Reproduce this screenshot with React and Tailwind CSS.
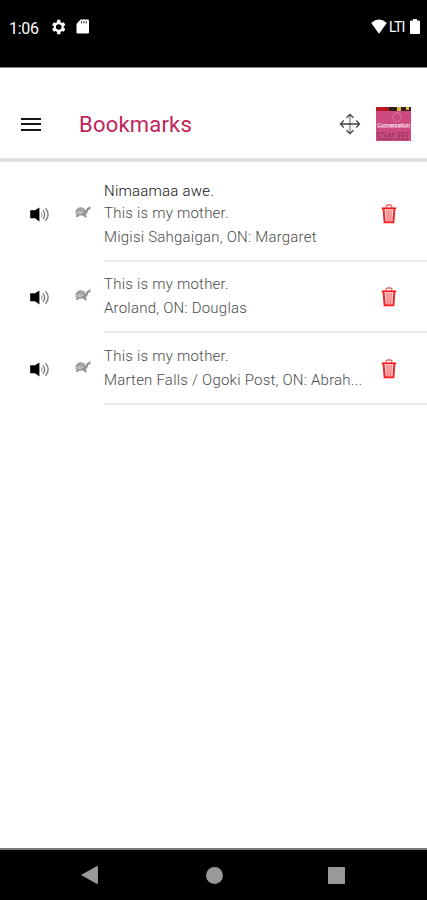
import React from "react";

const entries = [
  {
    title: "Nimaamaa awe.",
    text: "This is my mother.",
    source: "Migisi Sahgaigan, ON: Margaret",
    height: "h-[100px]",
    pad: "pt-[18px]",
    iconPad: "pt-[42px]",
  },
  {
    text: "This is my mother.",
    source: "Aroland, ON: Douglas",
    height: "h-[71px]",
    pad: "pt-[11px]",
    iconPad: "pt-[25px]",
  },
  {
    text: "This is my mother.",
    source: "Marten Falls / Ogoki Post, ON: Abrah...",
    height: "h-[72px]",
    pad: "pt-[12px]",
    iconPad: "pt-[26px]",
  },
];

function Speaker() {
  return (
    <svg className="h-5 w-5 shrink-0" viewBox="0 0 20 20" fill="none">
      <path d="M.2 6.3H5l4.4-2.8v14L5 14.3H.2z" fill="#000" />
      <path d="M11.4 8.5q1.6 2 0 4.3" stroke="#888" strokeWidth="1" />
      <path d="M13 6.3q3.2 4.2 0 8.6" stroke="#666" strokeWidth="1.1" />
      <path d="M15.4 4.3q5.4 6 0 12.4" stroke="#888" strokeWidth="1.5" />
    </svg>
  );
}

function Turtle() {
  return (
    <svg className="h-[18px] w-[18px] shrink-0" viewBox="0 0 18 18">
      <path d="M1.4 7.4Q2.6 3.4 6.6 3.2q4 0 5 4l-1.2 1.6H2z" fill="#9a9a9a" />
      <path
        d="M.3 8.6q3 1.4 6.8.8 3.6-.6 4.8-3.4l1.2-1.9q.9-.7 1.5-.6.3-1.3 1.4-1 1 .5.5 1.5.5 1.4-2.3 1.9-.5 3.2-2.6 4.6l1.6 2.8h-2.4l-1.6-1.7H5.2l-1 1.5H1.9l.8-2.3z"
        fill="#929292"
      />
      <path d="M2.5 8.2h7.5M4.5 5.6 6 8.2m2-4-.7 4" stroke="#d0d0d0" strokeWidth=".7" />
    </svg>
  );
}

function Trash() {
  return (
    <svg className="h-5 w-4 shrink-0" viewBox="0 0 16 20" fill="none">
      <path d="M5.2 4V2.2Q5.4 1 6.7 1h2.6q1.3 0 1.5 1.2V4" stroke="#f46a6a" strokeWidth="1.3" />
      <path d="M.8 4.4h14.4" stroke="#f01717" strokeWidth="1.9" />
      <path d="M2.6 5l1 13.2h8.8l1-13.2" fill="#ffdada" stroke="#f22424" strokeWidth="2" />
      <path d="M5.9 5.5l.3 12M8 5.5v12m2.1-12-.3 12" stroke="#f25a5a" strokeWidth="1" />
    </svg>
  );
}

function MoveIcon() {
  return (
    <svg className="h-[22px] w-[22px]" viewBox="0 0 22 22" fill="none" stroke="#444" strokeWidth="1.3">
      <path d="M11 1.5v19" stroke="#888" />
      <path d="M1.5 11h19" stroke="#222" />
      <path d="M7.5 4.7 11 1.5l3.5 3.2M7.5 17.3 11 20.5l3.5-3.2M4.7 7.5 1.5 11l3.2 3.5M17.3 7.5l3.2 3.5-3.2 3.5" />
    </svg>
  );
}

function CourseCover() {
  return (
    <div className="relative h-[34px] w-[35px] bg-[#cd4a80]">
      <svg className="block h-full w-full" viewBox="0 0 35 34" fill="none">
        <path d="M0 0h13v4H0z" fill="#b71822" />
        <path d="M13 0h22v4H13z" fill="#33201c" />
        <path d="M21 0h4v4h-4zM30 0h3v3h-3z" fill="#e3b83c" />
        <path d="M20 15q-5-5-2-8 3-3 6 0 3 3-2 8" stroke="#e07fab" strokeWidth=".9" />
        <path d="M1 20.5h33" stroke="#e79abb" strokeWidth=".7" />
        <path
          d="M1 26h9m2 1h8m2-1h11M1 29h5m2 0h9m4 0h12M2 32h30"
          stroke="#94385f"
          strokeWidth="1.7"
          strokeDasharray="3 1"
        />
      </svg>
      <span className="absolute left-[1px] top-[14px] text-[6px] leading-[8px] tracking-[-0.2px] text-white">
        Conversation
      </span>
    </div>
  );
}

function StatusBar() {
  return (
    <div className="flex h-[68px] shrink-0 items-start border-b border-[#888] bg-black pt-[17px] text-white">
      <span className="ml-[9px] w-[41px] text-[16px] leading-[23px] tracking-[-0.3px]">1:06</span>
      <svg className="mt-[2px] h-4 w-4" viewBox="2 2 20 20" fill="#fff">
        <path d="M19.14 12.94a7 7 0 0 0 0-1.88l2.03-1.58-1.92-3.32-2.39.96a7 7 0 0 0-1.62-.94L14.88 3h-3.84l-.36 3.18a7 7 0 0 0-1.62.94l-2.39-.96-1.92 3.32 2.03 1.58a7 7 0 0 0 0 1.88l-2.03 1.58 1.92 3.32 2.39-.96q.75.58 1.62.94l.36 3.18h3.84l.36-3.18q.87-.36 1.62-.94l2.39.96 1.92-3.32zM12.96 15.5a3.5 3.5 0 1 1 0-7 3.5 3.5 0 0 1 0 7z" />
      </svg>
      <svg className="ml-[10px] mt-[2px] h-[15px] w-[13px]" viewBox="0 0 13 15">
        <path d="M4.5.5H12q1 0 1 1v12q0 1-1 1H1.5q-1 0-1-1V5z" fill="#fff" />
        <path d="M5.5 2v2.5M7.9 2v2.5M10.2 2v2.5" stroke="#444" strokeWidth="1.1" />
      </svg>
      <div className="ml-auto flex pr-[7px]">
        <svg className="mt-[2px] h-[15px] w-4" viewBox="0 0 16 15">
          <path d="M.2 4Q8-2.8 15.8 4L8 14.8z" fill="#fff" />
        </svg>
        <span className="ml-[2px] w-[21px] text-[14px] leading-[21px] tracking-[-0.7px]">LTI</span>
        <svg className="mt-[2px] h-[15px] w-[10px]" viewBox="0 0 10 15">
          <path d="M3 0h4v1.5h2q1 0 1 1V14q0 1-1 1H1q-1 0-1-1V2.5q0-1 1-1h2z" fill="#fff" />
        </svg>
      </div>
    </div>
  );
}

export default function App() {
  return (
    <main className="flex h-[900px] w-[427px] flex-col overflow-hidden bg-white font-['Roboto',sans-serif]">
      <StatusBar />
      <header className="flex h-[94px] shrink-0 items-center border-b-4 border-[#e2e2e2] pb-[1px] pt-[23px]">
        <button aria-label="Menu" className="ml-[21px] flex w-5 flex-col gap-[3.5px]">
          <span className="h-[2px] bg-[#161616]" />
          <span className="h-[2px] bg-[#161616]" />
          <span className="h-[2px] bg-[#161616]" />
        </button>
        <h1 className="ml-[38px] pt-px text-[22px] leading-[28px] tracking-[0.2px] text-[#c2245c]">Bookmarks</h1>
        <div className="ml-auto flex items-center gap-[15px] pr-4">
          <MoveIcon />
          <CourseCover />
        </div>
      </header>
      <section className="flex-1">
        {entries.map((entry) => (
          <article key={entry.source} className={`flex ${entry.height}`}>
            <div className={`flex w-[104px] shrink-0 gap-[24px] pl-[30px] ${entry.iconPad}`}>
              <Speaker />
              <Turtle />
            </div>
            <div className="flex flex-1 border-b-2 border-[#ebebeb]">
              <div className={`w-[277px] whitespace-nowrap text-[15px] font-light tracking-[0.22px] text-[#4a4a4a] ${entry.pad}`}>
                {entry.title && <p className="leading-[22px] text-[#111]">{entry.title}</p>}
                <p className="leading-[22px]">{entry.text}</p>
                <p className="leading-[26px]">{entry.source}</p>
              </div>
              <button aria-label="Delete bookmark" className={`flex h-fit ${entry.iconPad}`}>
                <Trash />
              </button>
            </div>
          </article>
        ))}
      </section>
      <nav className="flex h-[52px] shrink-0 items-center border-t-2 border-[#777] bg-black">
        <svg className="ml-[81px] h-[18px] w-[17px]" viewBox="0 0 17 18">
          <path d="M0 9 16 0q1 0 1 1v16q0 1-1 1z" fill="#999" />
        </svg>
        <span className="ml-[108px] h-[17px] w-[17px] rounded-full bg-[#999]" />
        <span className="ml-[105px] h-[17px] w-[17px] rounded-[1px] bg-[#999]" />
      </nav>
    </main>
  );
}
